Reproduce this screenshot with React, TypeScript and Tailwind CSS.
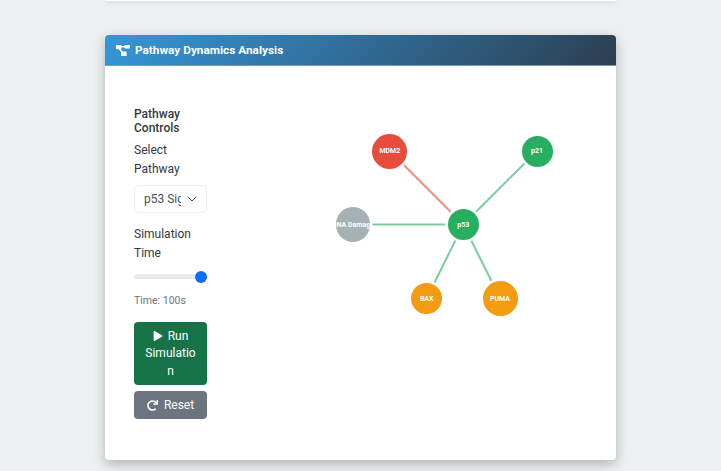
import { ChevronDown } from "lucide-react";
import { FaPlay, FaRedo } from "react-icons/fa";

const nodes = [
  { label: "MDM2", x: 389.8, y: 151, size: 35, cls: "bg-[#e74c3c]" },
  { label: "p21", x: 537, y: 151, size: 31, cls: "bg-[#27ae60]" },
  { label: "DNA Damage", x: 353, y: 224.5, size: 34.5, cls: "bg-[#a5b1b2]" },
  { label: "p53", x: 463.3, y: 224.5, size: 31, cls: "bg-[#27ae60]" },
  { label: "BAX", x: 426.7, y: 298.3, size: 31, cls: "bg-[#f39c12]" },
  { label: "PUMA", x: 500, y: 298.3, size: 35, cls: "bg-[#f39c12]" },
];

const ox = 207;
const oy = 66;
const hub = nodes[3];

function Graph() {
  return (
    <div className="relative h-[394px] flex-1">
      <svg className="absolute inset-0 h-full w-full">
        <g fill="none" strokeWidth="2" strokeOpacity="0.62">
          {nodes
            .filter((n) => n !== hub)
            .map((n) => (
              <line
                key={n.label}
                x1={hub.x - ox}
                y1={hub.y - oy}
                x2={n.x - ox}
                y2={n.y - oy}
                stroke={n.label === "MDM2" ? "#e74c3c" : "#27ae60"}
              />
            ))}
        </g>
      </svg>
      {nodes.map((n) => (
        <div
          key={n.label}
          className={`absolute flex items-center justify-center overflow-hidden rounded-full pt-[2px] text-[7px] font-bold whitespace-nowrap text-white ring-[2.5px] ring-white ${n.cls}`}
          style={{ left: n.x - ox - n.size / 2, top: n.y - oy - n.size / 2, width: n.size, height: n.size }}
        >
          {n.label}
        </div>
      ))}
    </div>
  );
}

export default function App() {
  return (
    <div className="min-h-[471px] overflow-hidden bg-[#ecf0f1] px-[105px] font-['Roboto',sans-serif] text-[12px] leading-[19.2px] text-[#33383d]">
      <div className="h-px rounded-b-md bg-white shadow-[0_1px_4px_rgba(0,0,0,0.25)]" />
      <div className="mt-[34px] h-[425px] overflow-hidden rounded-[4px] bg-white shadow-[0_4px_12px_rgba(0,0,0,0.25)]">
        <div className="flex h-[31px] items-center gap-[5px] border-b border-[#7f9bb0] bg-[linear-gradient(135deg,#3498db,#2c3e50)] px-[11px] text-[11.8px] font-bold text-white">
          <svg width="14" height="11" viewBox="0 0 14 11" fill="white">
            <rect x="0" y="0" width="5.4" height="4.2" rx="0.6" />
            <rect x="8.6" y="0" width="5.4" height="3.6" rx="0.6" />
            <rect x="5.2" y="6.6" width="5.4" height="4.4" rx="0.6" />
            <path d="M5 1.1h4v1.4H5zM2.6 3.8h1.9l2.6 3.2-1.6 1z" />
          </svg>
          <span className="pt-px">Pathway Dynamics Analysis</span>
        </div>
        <div className="flex pl-[29px]">
          <div className="w-[73px] shrink-0 pt-[41px]">
            <div className="mb-[5px] text-[12px] leading-[14.4px] font-medium">Pathway Controls</div>
            <div>Select Pathway</div>
            <div className="mt-[6px] flex h-[28px] items-center rounded-[5px] border border-[#eceef0] pr-[6px] pl-[9px] text-[#495057]">
              <span className="w-[37px] shrink-0 overflow-hidden whitespace-nowrap">p53 Signaling</span>
              <ChevronDown size={16} strokeWidth={1.4} className="ml-[3px] shrink-0 text-[#343a40]" />
            </div>
            <div className="mt-[12px]">Simulation Time</div>
            <div className="relative mt-[5px] h-[16px]">
              <div className="absolute top-[5.5px] h-[5px] w-full rounded-full bg-[#e9ecef]" />
              <div className="absolute top-[2px] right-0 size-[12px] rounded-full bg-[#0d6efd]" />
            </div>
            <div className="mt-[8px] text-[10.5px] leading-[16px] text-[#6c757d]">Time: 100s</div>
            <div className="mt-[13px] rounded-[4px] bg-[#157347] px-[11px] pt-[6px] pb-[4px] text-center leading-[17.7px] text-white [overflow-wrap:anywhere]">
              <FaPlay size={10} className="mr-[5px] inline-block align-[-1px]" />
              Run Simulation
            </div>
            <div className="mt-[6px] flex h-[28px] items-center justify-center gap-[6px] rounded-[4px] bg-[#6c757d] pt-px text-white">
              <FaRedo size={11} />
              <span>Reset</span>
            </div>
          </div>
          <Graph />
        </div>
      </div>
    </div>
  );
}
